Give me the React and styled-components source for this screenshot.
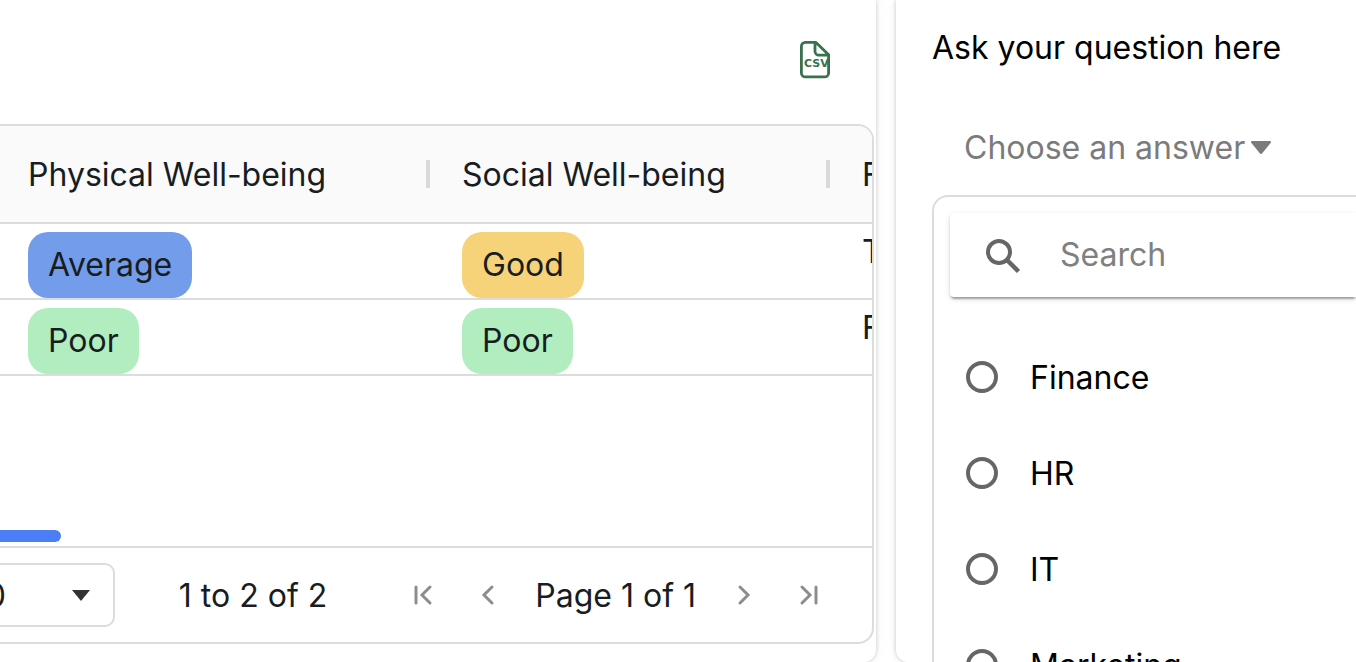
import React, { useState } from "react";
import styled, { createGlobalStyle } from "styled-components";

const GlobalStyle = createGlobalStyle`
  * {
    box-sizing: border-box;
  }
  body {
    margin: 0;
    background: #fff;
    color: #181d1f;
    font-family: Inter, "Liberation Sans", sans-serif;
    font-size: 32px;
    line-height: 39px;
  }
  button,
  input,
  select {
    font: inherit;
    color: inherit;
    margin: 0;
  }
`;

const Page = styled.div`
  display: flex;
  gap: 20px;
  height: 100vh;
  overflow: hidden;
`;

const Card = styled.section`
  display: flex;
  flex-direction: column;
  min-width: 0;
  background: #fff;
  box-shadow: 0 0 4px rgba(0, 0, 0, 0.22), 0 0 16px rgba(0, 0, 0, 0.04);
`;

const ReportCard = styled(Card)`
  flex: 1;
  padding: 0 2px 18px 0;
  border-radius: 0 0 12px 0;
`;

const QuestionCard = styled(Card)`
  flex: 0 0 460px;
  padding: 28px 0 0 36px;
  border-radius: 0 0 0 12px;
  color: #000;
`;

const Toolbar = styled.div`
  display: flex;
  justify-content: flex-end;
  padding: 40px 40px 44px;
`;

const IconButton = styled.button`
  display: flex;
  padding: 0;
  border: 0;
  background: none;
  color: #8b8e8f;
  cursor: pointer;
`;

const Grid = styled.div`
  display: flex;
  flex-direction: column;
  flex: 1;
  min-height: 0;
  border: 2px solid #dcdcdc;
  border-left: 0;
  border-radius: 0 16px 16px 0;
  overflow: hidden;
`;

const Table = styled.table`
  width: 100%;
  table-layout: fixed;
  border-collapse: separate;
  border-spacing: 0;
`;

const HeadCell = styled.th`
  height: 98px;
  width: ${(props) => props.$width};
  padding: 0 0 0 ${(props) => (props.$first ? 28 : 32)}px;
  background: #fafafa;
  border-bottom: 2px solid #dcdcdc;
  font-weight: 400;
  text-align: left;
  white-space: nowrap;
  overflow: hidden;
`;

const HeadLabel = styled.div`
  display: flex;
  align-items: center;
  justify-content: space-between;
`;

const Separator = styled.span`
  width: 4px;
  height: 28px;
  background: #dadada;
`;

const Cell = styled.td`
  height: 76px;
  padding: 8px 0 0 ${(props) => (props.$first ? 28 : 32)}px;
  border-bottom: 2px solid #dcdcdc;
  vertical-align: top;
  white-space: nowrap;
  overflow: hidden;
`;

const chipColors = {
  Average: "#739cea",
  Good: "#f6d379",
  Poor: "#b1edbf",
};

const Chip = styled.span`
  display: inline-block;
  padding: 13px 20px 14px;
  border-radius: 20px;
  background: ${(props) => chipColors[props.$level]};
  vertical-align: top;
`;

const ScrollTrack = styled.div`
  margin-top: auto;
  padding-bottom: 4px;
`;

const ScrollThumb = styled.div`
  width: 7%;
  height: 12px;
  border-radius: 0 6px 6px 0;
  background: #4c7ff7;
`;

const Pagination = styled.div`
  display: flex;
  align-items: center;
  justify-content: flex-end;
  height: 96px;
  padding-right: 48px;
  border-top: 2px solid #dcdcdc;
`;

const PageSize = styled.div`
  display: grid;
  flex: none;
  align-items: center;
  margin-right: 64px;

  & select,
  & svg {
    grid-area: 1 / 1;
  }
  & svg {
    justify-self: end;
    margin-right: 25px;
    pointer-events: none;
  }
  & select {
    width: 160px;
    height: 64px;
    padding: 0 16px;
    border: 2px solid #dcdcdc;
    border-radius: 10px;
    background: #fff;
    appearance: none;
  }
`;

const Summary = styled.span`
  flex: none;
  white-space: nowrap;
`;

const Pager = styled.nav`
  display: flex;
  flex: none;
  align-items: center;
  gap: 32px;
  margin-left: 80px;
`;

const Question = styled.h2`
  margin: 0;
  font-size: 32px;
  font-weight: 400;
`;

const AnswerButton = styled.button`
  display: flex;
  align-items: center;
  align-self: flex-start;
  gap: 5px;
  margin: 61px 32px 28px;
  padding: 0;
  border: 0;
  background: none;
  color: #7b7b7b;
`;

const Dropdown = styled.div`
  flex: 1;
  padding: 16px 0 0 16px;
  border: 2px solid #dcdcdc;
  border-width: 2px 0 0 2px;
  border-radius: 16px 0 0 0;
`;

const SearchBox = styled.label`
  display: flex;
  align-items: center;
  gap: 32px;
  height: 84px;
  padding: 0 0 2px 30px;
  border-radius: 4px 0 0 4px;
  color: #666;
  box-shadow: 0 4px 2px -2px rgba(0, 0, 0, 0.2), 0 2px 2px rgba(0, 0, 0, 0.14),
    0 2px 6px rgba(0, 0, 0, 0.12);

  & input {
    flex: 1;
    min-width: 0;
    padding: 0;
    border: 0;
    outline: 0;
    background: none;
  }
  & input::placeholder {
    color: #808080;
    opacity: 1;
  }
`;

const Options = styled.div`
  padding: 32px 0 0 16px;
`;

const Option = styled.label`
  display: flex;
  align-items: center;
  gap: 32px;
  height: 96px;

  & input {
    width: 32px;
    height: 32px;
    border: 4px solid #666;
    border-radius: 50%;
    appearance: none;
  }
  & input:checked {
    background: radial-gradient(#666 0 7px, #fff 8px);
  }
`;

const rows = [
  { physical: "Average", social: "Good", next: "T" },
  { physical: "Poor", social: "Poor", next: "F" },
];

const departments = ["Finance", "HR", "IT", "Marketing"];

const pagerPaths = {
  first: "M5 4v16M19 4l-8 8 8 8",
  previous: "M17 4l-8 8 8 8",
  next: "M8 4l8 8-8 8",
  last: "M20 4v16M6 4l8 8-8 8",
};

const PagerButton = ({ type }) => (
  <IconButton aria-label={`${type} page`}>
    <svg
      width="32"
      height="32"
      viewBox="0 0 32 32"
      fill="none"
      stroke="currentColor"
      strokeWidth="3"
      strokeLinecap="round"
    >
      <path d={pagerPaths[type]} transform="translate(4 4)" />
    </svg>
  </IconButton>
);

const CsvIcon = () => (
  <svg width="40" height="40" viewBox="0 0 40 40" fill="none">
    <path
      d="M22 2.400H11.400a4 4 0 0 0-4 4V32.900a4 4 0 0 0 4 4h19.200a4 4 0 0 0 4-4V14.800zM21 2.400V11.200a4 4 0 0 0 4 4h9.500"
      stroke="#38724d"
      strokeWidth="2.800"
      strokeLinejoin="round"
    />
    <text
      x="10"
      y="27"
      fill="#38724d"
      fontFamily="DejaVu Sans, sans-serif"
      fontSize="11"
      fontWeight="700"
    >
      CSV
    </text>
  </svg>
);

function App() {
  const [search, setSearch] = useState("");
  const [answer, setAnswer] = useState("");

  const visible = departments.filter((name) =>
    name.toLowerCase().includes(search.toLowerCase())
  );

  return (
    <Page>
      <GlobalStyle />
      <ReportCard>
        <Toolbar>
          <IconButton aria-label="Export CSV">
            <CsvIcon />
          </IconButton>
        </Toolbar>
        <Grid>
          <Table>
            <thead>
              <tr>
                <HeadCell $first $width="430px">
                  <HeadLabel>
                    Physical Well-being
                    <Separator />
                  </HeadLabel>
                </HeadCell>
                <HeadCell $width="400px">
                  <HeadLabel>
                    Social Well-being
                    <Separator />
                  </HeadLabel>
                </HeadCell>
                <HeadCell>F</HeadCell>
              </tr>
            </thead>
            <tbody>
              {rows.map((row, index) => (
                <tr key={index}>
                  <Cell $first>
                    <Chip $level={row.physical}>{row.physical}</Chip>
                  </Cell>
                  <Cell>
                    <Chip $level={row.social}>{row.social}</Chip>
                  </Cell>
                  <Cell>{row.next}</Cell>
                </tr>
              ))}
            </tbody>
          </Table>
          <ScrollTrack>
            <ScrollThumb />
          </ScrollTrack>
          <Pagination>
            <PageSize>
              <select aria-label="Page size" defaultValue="10">
                <option>10</option>
                <option>20</option>
                <option>50</option>
              </select>
              <svg width="18" height="12" viewBox="0 0 18 12">
                <path d="M0 1h18L9 12z" fill="#303435" />
              </svg>
            </PageSize>
            <Summary>1 to 2 of 2</Summary>
            <Pager aria-label="Pagination">
              <PagerButton type="first" />
              <PagerButton type="previous" />
              <span>Page 1 of 1</span>
              <PagerButton type="next" />
              <PagerButton type="last" />
            </Pager>
          </Pagination>
        </Grid>
      </ReportCard>

      <QuestionCard>
        <Question>Ask your question here</Question>
        <AnswerButton aria-expanded="true">
          {answer || "Choose an answer"}
          <svg width="22" height="16" viewBox="0 0 22 16">
            <path
              d="M2 2h18l-9 11z"
              fill="currentColor"
              stroke="currentColor"
              strokeWidth="2"
              strokeLinejoin="round"
            />
          </svg>
        </AnswerButton>
        <Dropdown>
          <SearchBox>
            <svg
              width="48"
              height="48"
              viewBox="0 0 48 48"
              fill="none"
              stroke="currentColor"
              strokeWidth="4"
            >
              <circle cx="19" cy="22" r="11" />
              <path d="M26.500 29.500l12 12" strokeWidth="4.500" />
            </svg>
            <input
              type="text"
              aria-label="Search"
              placeholder="Search"
              value={search}
              onChange={(event) => setSearch(event.target.value)}
            />
          </SearchBox>
          <Options>
            {visible.map((name) => (
              <Option key={name}>
                <input
                  type="radio"
                  name="department"
                  checked={answer === name}
                  onChange={() => setAnswer(name)}
                />
                {name}
              </Option>
            ))}
          </Options>
        </Dropdown>
      </QuestionCard>
    </Page>
  );
}

export default App;
